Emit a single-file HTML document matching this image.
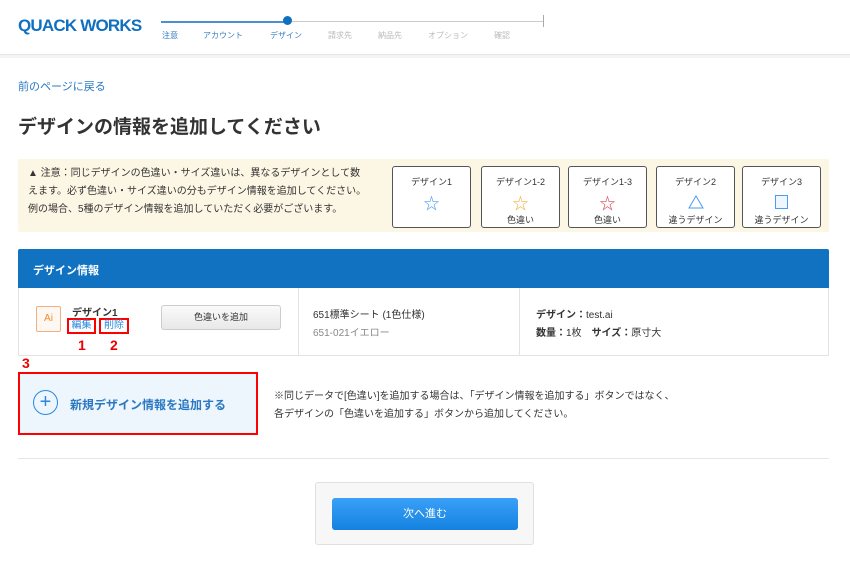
<!DOCTYPE html>
<html><head><meta charset="utf-8"><style>
*{margin:0;padding:0;box-sizing:border-box}
body{width:850px;height:569px;background:#fff;font-family:"Liberation Sans","Noto Sans CJK JP",sans-serif;color:#333;position:relative;overflow:hidden}
.a{position:absolute;white-space:nowrap}
.card{position:absolute;top:166px;width:79px;height:62px;border:1px solid #555;border-radius:3px;background:#fff;text-align:center;font-size:9px;color:#333}
.card .t{margin-top:8px}
.card .i{height:22px;margin-top:3px;display:flex;justify-content:center;align-items:center}
</style></head><body>
<div class="a" style="left:0;top:0;width:850px;height:55px;border-bottom:1px solid #e6e6e6"></div>
<div class="a" style="left:0;top:55px;width:850px;height:3px;background:#f4f4f4"></div>
<div class="a" style="left:18px;top:16px;font-size:17px;font-weight:900;color:#1070c0;letter-spacing:-0.8px;">QUACK WORKS</div>
<div class="a" style="left:161px;top:21px;width:126px;height:2px;background:#4a8fd0"></div>
<div class="a" style="left:287px;top:21px;width:256px;height:1px;background:#ccc"></div>
<div class="a" style="left:543px;top:15px;width:1px;height:12px;background:#aaa"></div>
<div class="a" style="left:283px;top:16px;width:9px;height:9px;border-radius:50%;background:#1070c0"></div>
<div class="a" style="left:162px;top:30px;font-size:8px;color:#3a7fc4">注意</div>
<div class="a" style="left:203px;top:30px;font-size:8px;color:#3a7fc4">アカウント</div>
<div class="a" style="left:270px;top:30px;font-size:8px;color:#3a7fc4">デザイン</div>
<div class="a" style="left:328px;top:30px;font-size:8px;color:#bbb">請求先</div>
<div class="a" style="left:378px;top:30px;font-size:8px;color:#bbb">納品先</div>
<div class="a" style="left:428px;top:30px;font-size:8px;color:#bbb">オプション</div>
<div class="a" style="left:494px;top:30px;font-size:8px;color:#bbb">確認</div>
<div class="a" style="left:18px;top:78px;font-size:11px;color:#2a78c2">前のページに戻る</div>
<div class="a" style="left:18px;top:112px;font-size:19px;font-weight:bold;color:#333">デザインの情報を追加してください</div>
<div class="a" style="left:18px;top:159px;width:811px;height:73px;background:#fcf6e4;border-radius:2px"></div>
<div class="a" style="left:28px;top:165px;font-size:10px;line-height:18px;color:#333">▲ 注意：同じデザインの色違い・サイズ違いは、異なるデザインとして数<br>えます。必ず色違い・サイズ違いの分もデザイン情報を追加してください。<br>例の場合、5種のデザイン情報を追加していただく必要がございます。</div>
<div class="card" style="left:392px"><div class="t">デザイン1</div><div class="i"><span style="color:#4a9df0;font-size:16px">☆</span></div></div>
<div class="card" style="left:481px"><div class="t">デザイン1-2</div><div class="i"><span style="color:#f0b040;font-size:16px">☆</span></div><div>色違い</div></div>
<div class="card" style="left:568px"><div class="t">デザイン1-3</div><div class="i"><span style="color:#e04050;font-size:16px">☆</span></div><div>色違い</div></div>
<div class="card" style="left:656px"><div class="t">デザイン2</div><div class="i"><svg width="16" height="14"><path d="M8 1L15 13H1Z" fill="none" stroke="#4a9df0"/></svg></div><div>違うデザイン</div></div>
<div class="card" style="left:742px"><div class="t">デザイン3</div><div class="i"><div style="width:13px;height:14px;border:1px solid #4a9df0;background:#eef6ff"></div></div><div>違うデザイン</div></div>
<div class="a" style="left:18px;top:249px;width:811px;height:39px;background:#1172c2;border-radius:2px 2px 0 0"></div>
<div class="a" style="left:33px;top:262px;font-size:11px;font-weight:bold;color:#fff">デザイン情報</div>
<div class="a" style="left:18px;top:288px;width:811px;height:68px;border:1px solid #e3e3e3;border-top:none"></div>
<div class="a" style="left:298px;top:288px;width:1px;height:68px;background:#e3e3e3"></div>
<div class="a" style="left:519px;top:288px;width:1px;height:68px;background:#e3e3e3"></div>
<div class="a" style="left:36px;top:306px;width:25px;height:26px;border:1px solid #f0b080;border-radius:2px;background:#fff8f2;color:#f08a30;font-size:10px;text-align:center;line-height:24px">Ai</div>
<div class="a" style="left:72px;top:304px;font-size:10px;font-weight:bold;color:#333">デザイン1</div>
<div class="a" style="left:67px;top:318px;width:29px;height:16px;border:2px solid #f00;font-size:10px;color:#2a88e0;text-align:center;line-height:12px">編集</div>
<div class="a" style="left:99px;top:318px;width:30px;height:16px;border:2px solid #f00;font-size:10px;color:#2a88e0;text-align:center;line-height:12px">削除</div>
<div class="a" style="left:78px;top:337px;font-size:14px;font-weight:bold;color:#e00">1</div>
<div class="a" style="left:110px;top:337px;font-size:14px;font-weight:bold;color:#e00">2</div>
<div class="a" style="left:161px;top:305px;width:120px;height:25px;border:1px solid #ccc;border-radius:3px;background:linear-gradient(#fafafa,#e8e8e8);font-size:9px;text-align:center;line-height:23px">色違いを追加</div>
<div class="a" style="left:313px;top:306px;font-size:10px">651標準シート (1色仕様)</div>
<div class="a" style="left:313px;top:324px;font-size:10px;color:#888">651-021イエロー</div>
<div class="a" style="left:536px;top:306px;font-size:10px"><b>デザイン：</b>test.ai</div>
<div class="a" style="left:536px;top:324px;font-size:10px"><b>数量：</b>1枚　<b>サイズ：</b>原寸大</div>
<div class="a" style="left:22px;top:355px;font-size:14px;font-weight:bold;color:#e00">3</div>
<div class="a" style="left:18px;top:372px;width:240px;height:63px;border:2px solid #f00;background:#edf5fd"></div>
<div class="a" style="left:33px;top:390px;width:25px;height:25px;border:1px solid #2a88e0;border-radius:50%;color:#2a88e0;font-size:20px;text-align:center;line-height:22px;font-weight:300">+</div>
<div class="a" style="left:70px;top:396px;font-size:12px;font-weight:bold;color:#2a78c2">新規デザイン情報を追加する</div>
<div class="a" style="left:274px;top:388px;font-size:10px;line-height:18px">※同じデータで[色違い]を追加する場合は、「デザイン情報を追加する」ボタンではなく、<br>各デザインの「色違いを追加する」ボタンから追加してください。</div>
<div class="a" style="left:18px;top:458px;width:811px;height:1px;background:#e6e6e6"></div>
<div class="a" style="left:315px;top:482px;width:219px;height:63px;border:1px solid #e0e0e0;border-radius:3px;background:#f7f7f7"></div>
<div class="a" style="left:332px;top:498px;width:186px;height:32px;border-radius:3px;background:linear-gradient(#3aa0f8,#1582e0);color:#fff;font-size:11px;text-align:center;line-height:32px">次へ進む</div>
</body></html>
